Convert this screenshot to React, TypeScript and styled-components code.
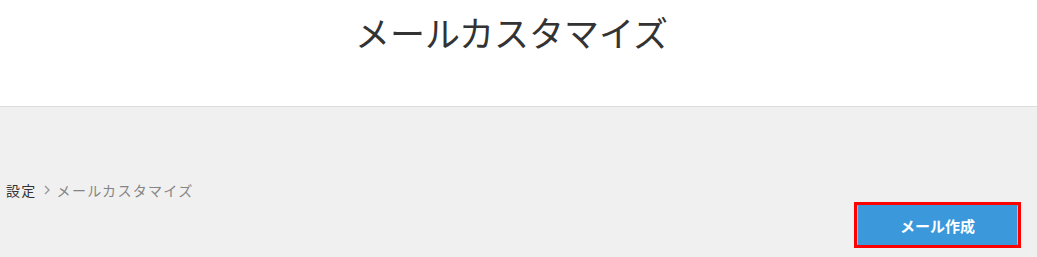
import React from "react";
import styled, { createGlobalStyle } from "styled-components";

const GlobalStyle = createGlobalStyle`
  html, body { margin: 0; padding: 0; background: #f0f0f0; }
  body { font-family: "Noto Sans CJK JP", "Noto Sans", sans-serif; }
`;

const Page = styled.div`
  width: 1037px;
  height: 257px;
  display: flex;
  flex-direction: column;
  background: #f0f0f0;
  overflow: hidden;
`;

const Header = styled.header`
  height: 107px;
  box-sizing: border-box;
  background: #ffffff;
  border-bottom: 1px solid #dcdcdc;
  display: flex;
  justify-content: center;
  padding-top: 6px;
  padding-right: 14px;
`;

const Title = styled.h1`
  margin: 0;
  font-size: 35px;
  font-weight: 400;
  line-height: 52px;
  letter-spacing: 0px;
  color: #333333;
`;

const Body = styled.main`
  flex: 1;
  display: flex;
  flex-direction: column;
  padding: 72px 16px 0 6px;
`;

const Breadcrumb = styled.nav`
  display: flex;
  align-items: center;
  gap: 6px;
  font-size: 14px;
  line-height: 22px;
  letter-spacing: 1.3px;
`;

const Crumb = styled.span<{ $current?: boolean }>`
  color: ${(p) => (p.$current ? "#858585" : "#333333")};
`;

const Sep = styled.span`
  color: #999999;
  display: flex;
  align-items: center;
`;

const Actions = styled.div`
  display: flex;
  justify-content: flex-end;
  margin-top: 1px;
`;

const Button = styled.button`
  width: 161px;
  height: 40px;
  box-sizing: border-box;
  margin: 3px;
  border: 1px solid #9cc6e6;
  border-top-color: #3a98db;
  border-bottom-color: #3a98db;
  outline: 3px solid #ff0000;
  background: #3a98db;
  color: #ffffff;
  font-family: "Noto Sans CJK JP", "Noto Sans", sans-serif;
  font-size: 15px;
  font-weight: 700;
  letter-spacing: 0px;
  cursor: pointer;
`;

export default function App() {
  return (
    <Page>
      <GlobalStyle />
      <Header>
        <Title>メールカスタマイズ</Title>
      </Header>
      <Body>
        <Breadcrumb>
          <Crumb>設定</Crumb>
          <Sep>
            <svg width="8" height="12" viewBox="0 0 8 12">
              <path d="M2 2 L6 6 L2 10" fill="none" stroke="#999" strokeWidth="1.4" />
            </svg>
          </Sep>
          <Crumb $current>メールカスタマイズ</Crumb>
        </Breadcrumb>
        <Actions>
          <Button>メール作成</Button>
        </Actions>
      </Body>
    </Page>
  );
}
